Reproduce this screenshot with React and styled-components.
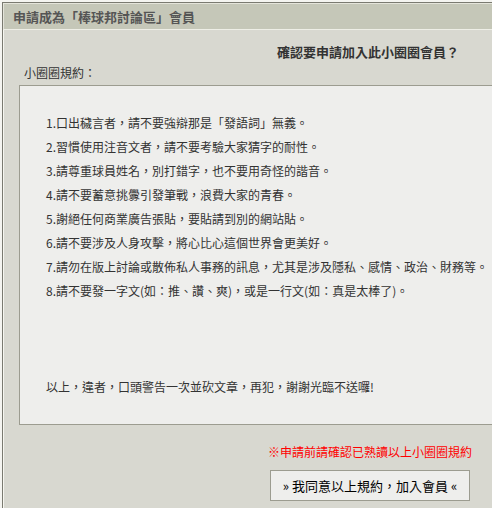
import React from "react";
import styled, { createGlobalStyle } from "styled-components";

const GlobalStyle = createGlobalStyle`
  html, body {
    margin: 0;
    padding: 0;
    background: #f4f4f0;
    overflow: hidden;
  }
  body {
    font-family: "Noto Sans CJK TC", "Liberation Sans", sans-serif;
    font-size: 12px;
    color: #333;
  }
`;

const rules = [
  "1.口出穢言者，請不要強辯那是「發語詞」無義。",
  "2.習慣使用注音文者，請不要考驗大家猜字的耐性。",
  "3.請尊重球員姓名，別打錯字，也不要用奇怪的諧音。",
  "4.請不要蓄意挑釁引發筆戰，浪費大家的青春。",
  "5.謝絕任何商業廣告張貼，要貼請到別的網站貼。",
  "6.請不要涉及人身攻擊，將心比心這個世界會更美好。",
  "7.請勿在版上討論或散佈私人事務的訊息，尤其是涉及隱私、感情、政治、財務等。",
  "8.請不要發一字文(如：推、讚、爽)，或是一行文(如：真是太棒了)。",
];

const JoinPanel = () => {
  return (
    <Panel>
      <Header>申請成為「棒球邦討論區」會員</Header>
      <Body>
        <Question>確認要申請加入此小圈圈會員？</Question>
        <Label>小圈圈規約：</Label>
        <RulesBox>
          <RuleList>
            {rules.map((r) => (
              <li key={r}>{r}</li>
            ))}
          </RuleList>
          <Closing>以上，違者，口頭警告一次並砍文章，再犯，謝謝光臨不送囉!</Closing>
        </RulesBox>
        <Notice>※申請前請確認已熟讀以上小圈圈規約</Notice>
        <ButtonRow>
          <AgreeButton type="button">» 我同意以上規約，加入會員 «</AgreeButton>
        </ButtonRow>
      </Body>
    </Panel>
  );
};

const Panel = styled.div`
  margin: 2px 0 0 2px;
  width: 490px;
  height: 506px;
  border-top: 1px solid #7a7a70;
  border-left: 1px solid #7a7a70;
  box-shadow: inset 1px 1px 0 #f6f6f0;
  background: #d8d8d0;
  box-sizing: border-box;
  overflow: hidden;
`;

const Header = styled.div`
  height: 26px;
  line-height: 27px;
  padding-left: 10px;
  background: #c5c7b8;
  border-bottom: 1px solid #eeeee6;
  box-shadow: inset 1px 1px 0 #e4e4da;
  font-size: 13px;
  font-weight: bold;
  color: #555;
`;

const Body = styled.div`
  padding: 13px 0 0 16px;
`;

const Question = styled.div`
  text-align: right;
  padding-right: 33px;
  line-height: 18px;
  font-size: 13px;
  font-weight: bold;
  color: #333;
`;

const Label = styled.div`
  margin-top: 3px;
  padding-left: 5px;
  line-height: 18px;
  color: #333;
`;

const RulesBox = styled.div`
  margin-top: 3px;
  border: 1px solid #9c9c90;
  border-right: none;
  background: #eeeeec;
  padding: 25px 0 24px 26px;
  height: 340px;
  box-sizing: border-box;
`;

const RuleList = styled.ul`
  list-style: none;
  margin: 0;
  padding: 0;
  line-height: 24px;
`;

const Closing = styled.p`
  margin: 72px 0 0;
  line-height: 24px;
`;

const Notice = styled.div`
  margin-top: 18px;
  padding-right: 20px;
  text-align: right;
  line-height: 18px;
  color: #ff0000;
`;

const ButtonRow = styled.div`
  margin-top: 9px;
  padding-right: 22px;
  display: flex;
  justify-content: flex-end;
`;

const AgreeButton = styled.button`
  width: 200px;
  height: 31px;
  border: 1px solid #9c9c90;
  background: #eeeeec;
  font-family: "Noto Sans CJK TC", "Liberation Sans", sans-serif;
  font-size: 13px;
  color: #000;
  padding: 0;
  cursor: pointer;
`;

export default function App() {
  return (
    <>
      <GlobalStyle />
      <JoinPanel />
    </>
  );
}
